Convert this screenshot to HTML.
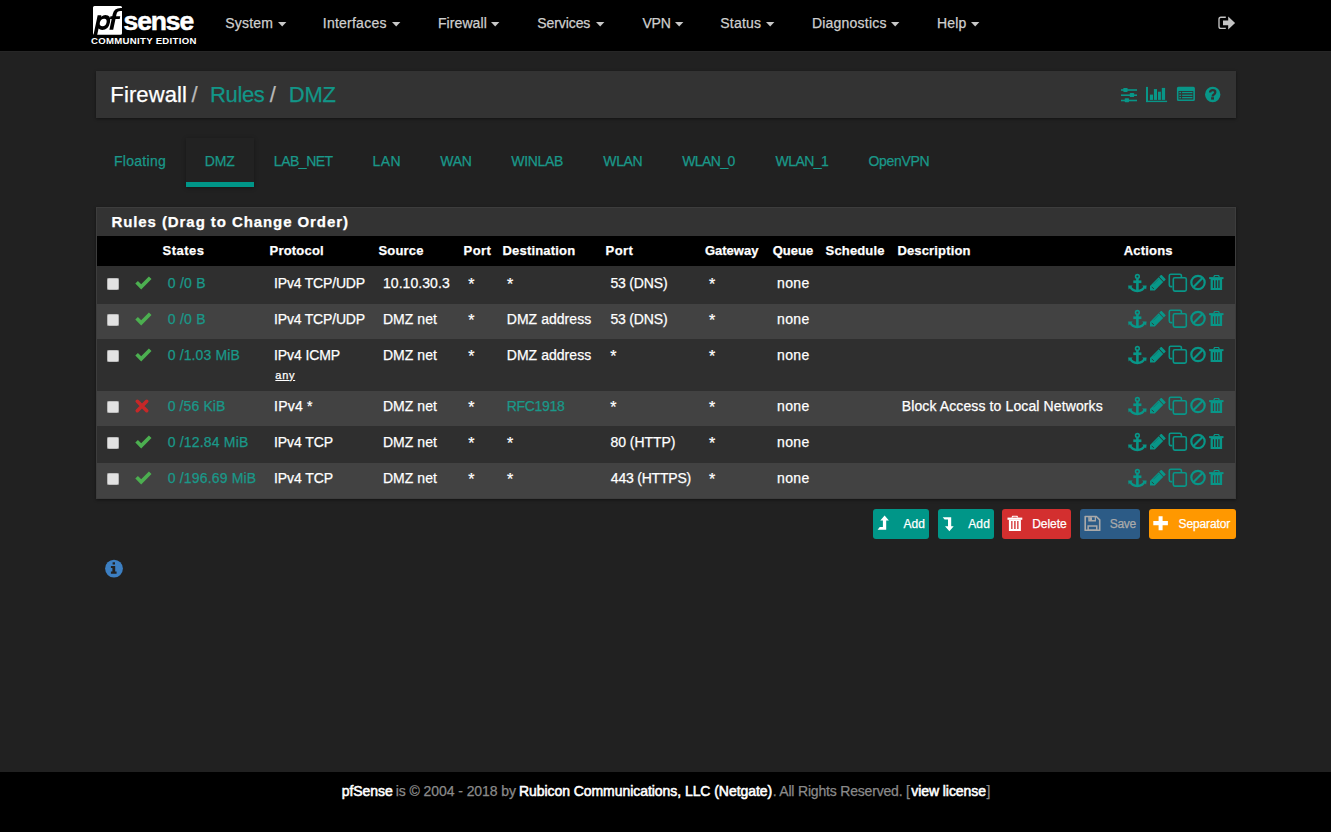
<!DOCTYPE html>
<html><head><meta charset="utf-8">
<style>
html,body{margin:0;padding:0;}
body{width:1331px;height:832px;overflow:hidden;background:#212121;position:relative;font-family:"Liberation Sans",sans-serif;}
.t{position:absolute;white-space:pre;font-family:"Liberation Sans",sans-serif;-webkit-text-stroke:0.25px currentColor;}
.a{position:absolute;}
svg{position:absolute;overflow:visible;}
</style></head><body>
<!-- navbar -->
<div class="a" style="left:0;top:0;width:1331px;height:51px;background:#000"></div>
<div class="a" style="left:0;top:51px;width:1331px;height:1px;background:#262626"></div>
<!-- header panel -->
<div class="a" style="left:96px;top:71px;width:1140px;height:47px;background:#333;box-shadow:0 1px 3px rgba(0,0,0,0.45)"></div>
<!-- active tab -->
<div class="a" style="left:186px;top:138px;width:68px;height:49px;background:#222;box-shadow:0 1px 4px rgba(0,0,0,0.35)"></div>
<div class="a" style="left:186px;top:182px;width:68px;height:5px;background:#009688"></div>
<!-- rules panel -->
<div class="a" style="left:96px;top:207px;width:1140px;height:292px;background:#3d3d3d;box-shadow:0 1px 3px rgba(0,0,0,0.45)"></div>
<div class="a" style="left:97px;top:208px;width:1138px;height:28px;background:#333"></div>
<div class="a" style="left:97px;top:236px;width:1138px;height:30px;background:#000"></div>
<div class="a" style="left:97px;top:266px;width:1138px;height:38px;background:#2f2f2f"></div>
<div class="a" style="left:97px;top:304px;width:1138px;height:35px;background:#424242"></div>
<div class="a" style="left:97px;top:339px;width:1138px;height:52px;background:#2f2f2f"></div>
<div class="a" style="left:97px;top:391px;width:1138px;height:35px;background:#424242"></div>
<div class="a" style="left:97px;top:426px;width:1138px;height:37px;background:#2f2f2f"></div>
<div class="a" style="left:97px;top:463px;width:1138px;height:35px;background:#424242"></div>
<!-- footer -->
<div class="a" style="left:0;top:772px;width:1331px;height:60px;background:#000"></div>
<svg style="left:90px;top:4px" width="110" height="44" viewBox="0 0 110 44" >
<path d="M3.5 1.9 H30.5 Q32 1.9 32 3.4 V29.2 Q32 30.7 30.5 30.7 H4.5 Q3 30.7 3 29.2 V3.4 Q3 1.9 4.5 1.9 Z" fill="#fff"/>
<g transform="translate(4.6,25.7) skewX(-12)">
<path fill-rule="evenodd" d="M0 -14.4 H3.7 V-13 Q5.5 -14.6 7.6 -14.6 Q13.8 -14.6 13.8 -7.3 Q13.8 0.2 7.6 0.2 Q5.4 0.2 3.7 -1.2 V5.5 H0 Z M3.7 -7.2 Q3.7 -3.4 7.3 -3.4 Q10.4 -3.4 10.4 -7.2 Q10.4 -11 7.3 -11 Q3.7 -11 3.7 -7.2 Z" fill="#000"/>
</g>
<g transform="translate(19.4,25.7) skewX(-12)">
<path d="M0 0 V-15.5 Q0 -21.8 6.6 -21.8 H9.5 V-18.7 H6.9 Q3.8 -18.7 3.8 -15.5 V0 Z" fill="#000"/>
<rect x="-1.8" y="-13.4" width="9.8" height="2.7" fill="#000"/>
</g>
<text x="33.5" y="25.8" font-family="Liberation Sans" font-weight="700" font-size="26.5" fill="#fff" stroke="#fff" stroke-width="0.5" letter-spacing="-1.1">sense</text>
<text x="1" y="40.3" font-family="Liberation Sans" font-weight="700" font-size="9.6" fill="#fff" letter-spacing="0.3">COMMUNITY EDITION</text>
</svg>
<svg style="left:277.8px;top:21.6px" width="8.4" height="4.6" viewBox="0 0 8.4 4.6" ><path d="M0 0 H8.4 L4.2 4.4 Z" fill="#c8c8c8"/></svg>
<svg style="left:392.0px;top:21.6px" width="8.4" height="4.6" viewBox="0 0 8.4 4.6" ><path d="M0 0 H8.4 L4.2 4.4 Z" fill="#c8c8c8"/></svg>
<svg style="left:491.1px;top:21.6px" width="8.4" height="4.6" viewBox="0 0 8.4 4.6" ><path d="M0 0 H8.4 L4.2 4.4 Z" fill="#c8c8c8"/></svg>
<svg style="left:596.0px;top:21.6px" width="8.4" height="4.6" viewBox="0 0 8.4 4.6" ><path d="M0 0 H8.4 L4.2 4.4 Z" fill="#c8c8c8"/></svg>
<svg style="left:675.3px;top:21.6px" width="8.4" height="4.6" viewBox="0 0 8.4 4.6" ><path d="M0 0 H8.4 L4.2 4.4 Z" fill="#c8c8c8"/></svg>
<svg style="left:765.6999999999999px;top:21.6px" width="8.4" height="4.6" viewBox="0 0 8.4 4.6" ><path d="M0 0 H8.4 L4.2 4.4 Z" fill="#c8c8c8"/></svg>
<svg style="left:890.6999999999999px;top:21.6px" width="8.4" height="4.6" viewBox="0 0 8.4 4.6" ><path d="M0 0 H8.4 L4.2 4.4 Z" fill="#c8c8c8"/></svg>
<svg style="left:971.1999999999999px;top:21.6px" width="8.4" height="4.6" viewBox="0 0 8.4 4.6" ><path d="M0 0 H8.4 L4.2 4.4 Z" fill="#c8c8c8"/></svg>
<svg style="left:1218px;top:15.5px" width="18" height="14" viewBox="0 0 18 14" >
<path d="M7.8 1.2 H3 Q1 1.2 1 3.2 V10.4 Q1 12.4 3 12.4 H7.8" fill="none" stroke="#c4c4c4" stroke-width="1.35"/>
<path d="M5 4.6 H10.2 V0.6 L17.1 7 L10.2 13.4 V9.3 H5 Z" fill="#c4c4c4"/>
</svg>
<svg style="left:1120px;top:86px" width="18" height="18" viewBox="0 0 18 18" >
<rect x="1" y="3.2" width="16" height="1.6" fill="#089688"/>
<rect x="1" y="8.4" width="16" height="1.6" fill="#089688"/>
<rect x="1" y="13.7" width="16" height="1.6" fill="#089688"/>
<rect x="3.3" y="1.9" width="4.3" height="4" rx="0.6" fill="#089688"/>
<rect x="9.8" y="7" width="4.3" height="4" rx="0.6" fill="#089688"/>
<rect x="4.7" y="12.2" width="4.3" height="4" rx="0.6" fill="#089688"/>
</svg>
<svg style="left:1145px;top:86px" width="24" height="18" viewBox="0 0 24 18" >
<rect x="1" y="0.9" width="2" height="15.2" fill="#089688"/>
<rect x="1" y="14.7" width="21.1" height="1.4" fill="#089688"/>
<rect x="4.9" y="8.6" width="3.1" height="5.3" fill="#089688"/>
<rect x="8.9" y="3.1" width="3.1" height="10.8" fill="#089688"/>
<rect x="13" y="5.7" width="2.9" height="8.2" fill="#089688"/>
<rect x="16.8" y="1.9" width="3.3" height="12" fill="#089688"/>
</svg>
<svg style="left:1176px;top:86px" width="20" height="16" viewBox="0 0 20 16" >
<path fill-rule="evenodd" d="M2.4 0.8 H17.4 Q18.9 0.8 18.9 2.3 V13.6 Q18.9 15.1 17.4 15.1 H2.4 Q0.9 15.1 0.9 13.6 V2.3 Q0.9 0.8 2.4 0.8 Z M2.5 5.1 V13.6 H17.3 V5.1 Z" fill="#089688"/>
<rect x="3.3" y="5.9" width="1.8" height="1.3" fill="#089688"/>
<rect x="3.3" y="8.6" width="1.8" height="1.3" fill="#089688"/>
<rect x="3.3" y="11" width="1.8" height="1.3" fill="#089688"/>
<rect x="6.1" y="5.9" width="10.4" height="1.3" fill="#089688"/>
<rect x="6.1" y="8.6" width="10.4" height="1.3" fill="#089688"/>
<rect x="6.1" y="11" width="10.4" height="1.3" fill="#089688"/>
</svg>
<svg style="left:1204px;top:86px" width="18" height="18" viewBox="0 0 18 18" >
<circle cx="8.7" cy="8.45" r="7.7" fill="#089688"/>
<path d="M6.1 6.6 Q6.1 4.2 8.8 4.2 Q11.3 4.2 11.3 6.3 Q11.3 7.6 9.9 8.4 Q8.7 9.1 8.7 10.1 V10.6" fill="none" stroke="#333" stroke-width="2.3"/>
<rect x="7.1" y="11.2" width="2.9" height="2.4" fill="#333"/>
</svg>
<div class="a" style="left:107px;top:278px;width:12px;height:12px;background:#e2e2e2;border-radius:2px;box-shadow:inset 0 0 0 0.6px #9a9a9a"></div>
<svg style="left:134px;top:275px" width="19" height="15" viewBox="0 0 19 15" ><path d="M2.6 7.2 L7.2 11.8 L16.2 2.8" fill="none" stroke="#4caf50" stroke-width="3.7" stroke-linejoin="miter"/></svg>
<svg style="left:1127px;top:272.5px" width="21" height="21" viewBox="0 0 21 21" >
<circle cx="10.4" cy="3.5" r="1.85" fill="none" stroke="#089688" stroke-width="1.6"/>
<rect x="6.3" y="7.4" width="8.1" height="2.7" fill="#089688"/>
<rect x="9.1" y="5.3" width="2.6" height="12.8" fill="#089688"/>
<path d="M3.2 13.4 Q4.8 18 10.4 18 Q16 18 17.6 13.4" fill="none" stroke="#089688" stroke-width="2.4"/>
<path d="M1.1 12.5 H5.6 L1.6 16.6 Z" fill="#089688"/>
<path d="M19.6 12.5 H15.1 L19.1 16.6 Z" fill="#089688"/>
</svg>
<svg style="left:1149.8px;top:274.8px" width="16" height="16" viewBox="0 0 16 16" >
<path d="M0 15.4 L0 11.0 L8.65 2.35 L13.25 6.95 L4.8 15.4 Z" fill="#089688"/>
<path d="M9.2 1.8 L10.9 0.1 Q11.3 -0.3 11.7 0.1 L15.5 3.9 Q15.9 4.3 15.5 4.7 L13.8 6.4 Z" fill="#089688"/>
<path d="M1.7 11.8 L3.9 14.0" stroke="#2f2f2f" stroke-width="0.9" opacity="0.9"/>
<path d="M3.4 9.3 L8.6 4.1" stroke="#2f2f2f" stroke-width="0.45" opacity="0.6"/>
</svg>
<svg style="left:1168px;top:273px" width="20" height="20" viewBox="0 0 20 20" >
<path d="M13.4 3.9 V2.8 Q13.4 1.3 11.9 1.3 H2.7 Q1.3 1.3 1.3 2.8 V12.1 Q1.3 13.6 2.7 13.6 H4.3" fill="none" stroke="#089688" stroke-width="1.6"/>
<rect x="5.3" y="4.7" width="13" height="13.4" rx="1.5" fill="none" stroke="#089688" stroke-width="1.6"/>
</svg>
<svg style="left:1189px;top:274px" width="18" height="18" viewBox="0 0 18 18" >
<circle cx="9" cy="8.5" r="6.7" fill="none" stroke="#089688" stroke-width="2.2"/>
<path d="M13.7 3.8 L4.3 13.2" stroke="#089688" stroke-width="2.2"/>
</svg>
<svg style="left:1209px;top:274px" width="15" height="17" viewBox="0 0 15 17" >
<path fill-rule="evenodd" d="M4.2 3.1 L5.1 1.1 H10 L10.9 3.1 Z M5.5 3.1 L6.0 2.1 H9.1 L9.6 3.1 Z" fill="#089688"/>
<rect x="0.1" y="3.1" width="14.4" height="2" fill="#089688"/>
<path fill-rule="evenodd" d="M1.6 5 H13.1 V15.9 H1.6 Z M3.9 6.2 V13.9 H5 V6.2 Z M6.6 6.2 V13.9 H7.9 V6.2 Z M9.3 6.2 V13.9 H10.6 V6.2 Z" fill="#089688"/>
</svg>
<div class="a" style="left:107px;top:314px;width:12px;height:12px;background:#e2e2e2;border-radius:2px;box-shadow:inset 0 0 0 0.6px #9a9a9a"></div>
<svg style="left:134px;top:311px" width="19" height="15" viewBox="0 0 19 15" ><path d="M2.6 7.2 L7.2 11.8 L16.2 2.8" fill="none" stroke="#4caf50" stroke-width="3.7" stroke-linejoin="miter"/></svg>
<svg style="left:1127px;top:308.5px" width="21" height="21" viewBox="0 0 21 21" >
<circle cx="10.4" cy="3.5" r="1.85" fill="none" stroke="#089688" stroke-width="1.6"/>
<rect x="6.3" y="7.4" width="8.1" height="2.7" fill="#089688"/>
<rect x="9.1" y="5.3" width="2.6" height="12.8" fill="#089688"/>
<path d="M3.2 13.4 Q4.8 18 10.4 18 Q16 18 17.6 13.4" fill="none" stroke="#089688" stroke-width="2.4"/>
<path d="M1.1 12.5 H5.6 L1.6 16.6 Z" fill="#089688"/>
<path d="M19.6 12.5 H15.1 L19.1 16.6 Z" fill="#089688"/>
</svg>
<svg style="left:1149.8px;top:310.8px" width="16" height="16" viewBox="0 0 16 16" >
<path d="M0 15.4 L0 11.0 L8.65 2.35 L13.25 6.95 L4.8 15.4 Z" fill="#089688"/>
<path d="M9.2 1.8 L10.9 0.1 Q11.3 -0.3 11.7 0.1 L15.5 3.9 Q15.9 4.3 15.5 4.7 L13.8 6.4 Z" fill="#089688"/>
<path d="M1.7 11.8 L3.9 14.0" stroke="#2f2f2f" stroke-width="0.9" opacity="0.9"/>
<path d="M3.4 9.3 L8.6 4.1" stroke="#2f2f2f" stroke-width="0.45" opacity="0.6"/>
</svg>
<svg style="left:1168px;top:309px" width="20" height="20" viewBox="0 0 20 20" >
<path d="M13.4 3.9 V2.8 Q13.4 1.3 11.9 1.3 H2.7 Q1.3 1.3 1.3 2.8 V12.1 Q1.3 13.6 2.7 13.6 H4.3" fill="none" stroke="#089688" stroke-width="1.6"/>
<rect x="5.3" y="4.7" width="13" height="13.4" rx="1.5" fill="none" stroke="#089688" stroke-width="1.6"/>
</svg>
<svg style="left:1189px;top:310px" width="18" height="18" viewBox="0 0 18 18" >
<circle cx="9" cy="8.5" r="6.7" fill="none" stroke="#089688" stroke-width="2.2"/>
<path d="M13.7 3.8 L4.3 13.2" stroke="#089688" stroke-width="2.2"/>
</svg>
<svg style="left:1209px;top:310px" width="15" height="17" viewBox="0 0 15 17" >
<path fill-rule="evenodd" d="M4.2 3.1 L5.1 1.1 H10 L10.9 3.1 Z M5.5 3.1 L6.0 2.1 H9.1 L9.6 3.1 Z" fill="#089688"/>
<rect x="0.1" y="3.1" width="14.4" height="2" fill="#089688"/>
<path fill-rule="evenodd" d="M1.6 5 H13.1 V15.9 H1.6 Z M3.9 6.2 V13.9 H5 V6.2 Z M6.6 6.2 V13.9 H7.9 V6.2 Z M9.3 6.2 V13.9 H10.6 V6.2 Z" fill="#089688"/>
</svg>
<div class="a" style="left:107px;top:350px;width:12px;height:12px;background:#e2e2e2;border-radius:2px;box-shadow:inset 0 0 0 0.6px #9a9a9a"></div>
<svg style="left:134px;top:347px" width="19" height="15" viewBox="0 0 19 15" ><path d="M2.6 7.2 L7.2 11.8 L16.2 2.8" fill="none" stroke="#4caf50" stroke-width="3.7" stroke-linejoin="miter"/></svg>
<svg style="left:1127px;top:344.5px" width="21" height="21" viewBox="0 0 21 21" >
<circle cx="10.4" cy="3.5" r="1.85" fill="none" stroke="#089688" stroke-width="1.6"/>
<rect x="6.3" y="7.4" width="8.1" height="2.7" fill="#089688"/>
<rect x="9.1" y="5.3" width="2.6" height="12.8" fill="#089688"/>
<path d="M3.2 13.4 Q4.8 18 10.4 18 Q16 18 17.6 13.4" fill="none" stroke="#089688" stroke-width="2.4"/>
<path d="M1.1 12.5 H5.6 L1.6 16.6 Z" fill="#089688"/>
<path d="M19.6 12.5 H15.1 L19.1 16.6 Z" fill="#089688"/>
</svg>
<svg style="left:1149.8px;top:346.8px" width="16" height="16" viewBox="0 0 16 16" >
<path d="M0 15.4 L0 11.0 L8.65 2.35 L13.25 6.95 L4.8 15.4 Z" fill="#089688"/>
<path d="M9.2 1.8 L10.9 0.1 Q11.3 -0.3 11.7 0.1 L15.5 3.9 Q15.9 4.3 15.5 4.7 L13.8 6.4 Z" fill="#089688"/>
<path d="M1.7 11.8 L3.9 14.0" stroke="#2f2f2f" stroke-width="0.9" opacity="0.9"/>
<path d="M3.4 9.3 L8.6 4.1" stroke="#2f2f2f" stroke-width="0.45" opacity="0.6"/>
</svg>
<svg style="left:1168px;top:345px" width="20" height="20" viewBox="0 0 20 20" >
<path d="M13.4 3.9 V2.8 Q13.4 1.3 11.9 1.3 H2.7 Q1.3 1.3 1.3 2.8 V12.1 Q1.3 13.6 2.7 13.6 H4.3" fill="none" stroke="#089688" stroke-width="1.6"/>
<rect x="5.3" y="4.7" width="13" height="13.4" rx="1.5" fill="none" stroke="#089688" stroke-width="1.6"/>
</svg>
<svg style="left:1189px;top:346px" width="18" height="18" viewBox="0 0 18 18" >
<circle cx="9" cy="8.5" r="6.7" fill="none" stroke="#089688" stroke-width="2.2"/>
<path d="M13.7 3.8 L4.3 13.2" stroke="#089688" stroke-width="2.2"/>
</svg>
<svg style="left:1209px;top:346px" width="15" height="17" viewBox="0 0 15 17" >
<path fill-rule="evenodd" d="M4.2 3.1 L5.1 1.1 H10 L10.9 3.1 Z M5.5 3.1 L6.0 2.1 H9.1 L9.6 3.1 Z" fill="#089688"/>
<rect x="0.1" y="3.1" width="14.4" height="2" fill="#089688"/>
<path fill-rule="evenodd" d="M1.6 5 H13.1 V15.9 H1.6 Z M3.9 6.2 V13.9 H5 V6.2 Z M6.6 6.2 V13.9 H7.9 V6.2 Z M9.3 6.2 V13.9 H10.6 V6.2 Z" fill="#089688"/>
</svg>
<div class="a" style="left:107px;top:401px;width:12px;height:12px;background:#e2e2e2;border-radius:2px;box-shadow:inset 0 0 0 0.6px #9a9a9a"></div>
<svg style="left:134px;top:398px" width="16" height="16" viewBox="0 0 16 16" ><path d="M3.3 3.3 L12.7 12.7 M12.7 3.3 L3.3 12.7" fill="none" stroke="#c62828" stroke-width="3.6" stroke-linecap="round"/></svg>
<svg style="left:1127px;top:395.5px" width="21" height="21" viewBox="0 0 21 21" >
<circle cx="10.4" cy="3.5" r="1.85" fill="none" stroke="#089688" stroke-width="1.6"/>
<rect x="6.3" y="7.4" width="8.1" height="2.7" fill="#089688"/>
<rect x="9.1" y="5.3" width="2.6" height="12.8" fill="#089688"/>
<path d="M3.2 13.4 Q4.8 18 10.4 18 Q16 18 17.6 13.4" fill="none" stroke="#089688" stroke-width="2.4"/>
<path d="M1.1 12.5 H5.6 L1.6 16.6 Z" fill="#089688"/>
<path d="M19.6 12.5 H15.1 L19.1 16.6 Z" fill="#089688"/>
</svg>
<svg style="left:1149.8px;top:397.8px" width="16" height="16" viewBox="0 0 16 16" >
<path d="M0 15.4 L0 11.0 L8.65 2.35 L13.25 6.95 L4.8 15.4 Z" fill="#089688"/>
<path d="M9.2 1.8 L10.9 0.1 Q11.3 -0.3 11.7 0.1 L15.5 3.9 Q15.9 4.3 15.5 4.7 L13.8 6.4 Z" fill="#089688"/>
<path d="M1.7 11.8 L3.9 14.0" stroke="#2f2f2f" stroke-width="0.9" opacity="0.9"/>
<path d="M3.4 9.3 L8.6 4.1" stroke="#2f2f2f" stroke-width="0.45" opacity="0.6"/>
</svg>
<svg style="left:1168px;top:396px" width="20" height="20" viewBox="0 0 20 20" >
<path d="M13.4 3.9 V2.8 Q13.4 1.3 11.9 1.3 H2.7 Q1.3 1.3 1.3 2.8 V12.1 Q1.3 13.6 2.7 13.6 H4.3" fill="none" stroke="#089688" stroke-width="1.6"/>
<rect x="5.3" y="4.7" width="13" height="13.4" rx="1.5" fill="none" stroke="#089688" stroke-width="1.6"/>
</svg>
<svg style="left:1189px;top:397px" width="18" height="18" viewBox="0 0 18 18" >
<circle cx="9" cy="8.5" r="6.7" fill="none" stroke="#089688" stroke-width="2.2"/>
<path d="M13.7 3.8 L4.3 13.2" stroke="#089688" stroke-width="2.2"/>
</svg>
<svg style="left:1209px;top:397px" width="15" height="17" viewBox="0 0 15 17" >
<path fill-rule="evenodd" d="M4.2 3.1 L5.1 1.1 H10 L10.9 3.1 Z M5.5 3.1 L6.0 2.1 H9.1 L9.6 3.1 Z" fill="#089688"/>
<rect x="0.1" y="3.1" width="14.4" height="2" fill="#089688"/>
<path fill-rule="evenodd" d="M1.6 5 H13.1 V15.9 H1.6 Z M3.9 6.2 V13.9 H5 V6.2 Z M6.6 6.2 V13.9 H7.9 V6.2 Z M9.3 6.2 V13.9 H10.6 V6.2 Z" fill="#089688"/>
</svg>
<div class="a" style="left:107px;top:437px;width:12px;height:12px;background:#e2e2e2;border-radius:2px;box-shadow:inset 0 0 0 0.6px #9a9a9a"></div>
<svg style="left:134px;top:434px" width="19" height="15" viewBox="0 0 19 15" ><path d="M2.6 7.2 L7.2 11.8 L16.2 2.8" fill="none" stroke="#4caf50" stroke-width="3.7" stroke-linejoin="miter"/></svg>
<svg style="left:1127px;top:431.5px" width="21" height="21" viewBox="0 0 21 21" >
<circle cx="10.4" cy="3.5" r="1.85" fill="none" stroke="#089688" stroke-width="1.6"/>
<rect x="6.3" y="7.4" width="8.1" height="2.7" fill="#089688"/>
<rect x="9.1" y="5.3" width="2.6" height="12.8" fill="#089688"/>
<path d="M3.2 13.4 Q4.8 18 10.4 18 Q16 18 17.6 13.4" fill="none" stroke="#089688" stroke-width="2.4"/>
<path d="M1.1 12.5 H5.6 L1.6 16.6 Z" fill="#089688"/>
<path d="M19.6 12.5 H15.1 L19.1 16.6 Z" fill="#089688"/>
</svg>
<svg style="left:1149.8px;top:433.8px" width="16" height="16" viewBox="0 0 16 16" >
<path d="M0 15.4 L0 11.0 L8.65 2.35 L13.25 6.95 L4.8 15.4 Z" fill="#089688"/>
<path d="M9.2 1.8 L10.9 0.1 Q11.3 -0.3 11.7 0.1 L15.5 3.9 Q15.9 4.3 15.5 4.7 L13.8 6.4 Z" fill="#089688"/>
<path d="M1.7 11.8 L3.9 14.0" stroke="#2f2f2f" stroke-width="0.9" opacity="0.9"/>
<path d="M3.4 9.3 L8.6 4.1" stroke="#2f2f2f" stroke-width="0.45" opacity="0.6"/>
</svg>
<svg style="left:1168px;top:432px" width="20" height="20" viewBox="0 0 20 20" >
<path d="M13.4 3.9 V2.8 Q13.4 1.3 11.9 1.3 H2.7 Q1.3 1.3 1.3 2.8 V12.1 Q1.3 13.6 2.7 13.6 H4.3" fill="none" stroke="#089688" stroke-width="1.6"/>
<rect x="5.3" y="4.7" width="13" height="13.4" rx="1.5" fill="none" stroke="#089688" stroke-width="1.6"/>
</svg>
<svg style="left:1189px;top:433px" width="18" height="18" viewBox="0 0 18 18" >
<circle cx="9" cy="8.5" r="6.7" fill="none" stroke="#089688" stroke-width="2.2"/>
<path d="M13.7 3.8 L4.3 13.2" stroke="#089688" stroke-width="2.2"/>
</svg>
<svg style="left:1209px;top:433px" width="15" height="17" viewBox="0 0 15 17" >
<path fill-rule="evenodd" d="M4.2 3.1 L5.1 1.1 H10 L10.9 3.1 Z M5.5 3.1 L6.0 2.1 H9.1 L9.6 3.1 Z" fill="#089688"/>
<rect x="0.1" y="3.1" width="14.4" height="2" fill="#089688"/>
<path fill-rule="evenodd" d="M1.6 5 H13.1 V15.9 H1.6 Z M3.9 6.2 V13.9 H5 V6.2 Z M6.6 6.2 V13.9 H7.9 V6.2 Z M9.3 6.2 V13.9 H10.6 V6.2 Z" fill="#089688"/>
</svg>
<div class="a" style="left:107px;top:473px;width:12px;height:12px;background:#e2e2e2;border-radius:2px;box-shadow:inset 0 0 0 0.6px #9a9a9a"></div>
<svg style="left:134px;top:470px" width="19" height="15" viewBox="0 0 19 15" ><path d="M2.6 7.2 L7.2 11.8 L16.2 2.8" fill="none" stroke="#4caf50" stroke-width="3.7" stroke-linejoin="miter"/></svg>
<svg style="left:1127px;top:467.5px" width="21" height="21" viewBox="0 0 21 21" >
<circle cx="10.4" cy="3.5" r="1.85" fill="none" stroke="#089688" stroke-width="1.6"/>
<rect x="6.3" y="7.4" width="8.1" height="2.7" fill="#089688"/>
<rect x="9.1" y="5.3" width="2.6" height="12.8" fill="#089688"/>
<path d="M3.2 13.4 Q4.8 18 10.4 18 Q16 18 17.6 13.4" fill="none" stroke="#089688" stroke-width="2.4"/>
<path d="M1.1 12.5 H5.6 L1.6 16.6 Z" fill="#089688"/>
<path d="M19.6 12.5 H15.1 L19.1 16.6 Z" fill="#089688"/>
</svg>
<svg style="left:1149.8px;top:469.8px" width="16" height="16" viewBox="0 0 16 16" >
<path d="M0 15.4 L0 11.0 L8.65 2.35 L13.25 6.95 L4.8 15.4 Z" fill="#089688"/>
<path d="M9.2 1.8 L10.9 0.1 Q11.3 -0.3 11.7 0.1 L15.5 3.9 Q15.9 4.3 15.5 4.7 L13.8 6.4 Z" fill="#089688"/>
<path d="M1.7 11.8 L3.9 14.0" stroke="#2f2f2f" stroke-width="0.9" opacity="0.9"/>
<path d="M3.4 9.3 L8.6 4.1" stroke="#2f2f2f" stroke-width="0.45" opacity="0.6"/>
</svg>
<svg style="left:1168px;top:468px" width="20" height="20" viewBox="0 0 20 20" >
<path d="M13.4 3.9 V2.8 Q13.4 1.3 11.9 1.3 H2.7 Q1.3 1.3 1.3 2.8 V12.1 Q1.3 13.6 2.7 13.6 H4.3" fill="none" stroke="#089688" stroke-width="1.6"/>
<rect x="5.3" y="4.7" width="13" height="13.4" rx="1.5" fill="none" stroke="#089688" stroke-width="1.6"/>
</svg>
<svg style="left:1189px;top:469px" width="18" height="18" viewBox="0 0 18 18" >
<circle cx="9" cy="8.5" r="6.7" fill="none" stroke="#089688" stroke-width="2.2"/>
<path d="M13.7 3.8 L4.3 13.2" stroke="#089688" stroke-width="2.2"/>
</svg>
<svg style="left:1209px;top:469px" width="15" height="17" viewBox="0 0 15 17" >
<path fill-rule="evenodd" d="M4.2 3.1 L5.1 1.1 H10 L10.9 3.1 Z M5.5 3.1 L6.0 2.1 H9.1 L9.6 3.1 Z" fill="#089688"/>
<rect x="0.1" y="3.1" width="14.4" height="2" fill="#089688"/>
<path fill-rule="evenodd" d="M1.6 5 H13.1 V15.9 H1.6 Z M3.9 6.2 V13.9 H5 V6.2 Z M6.6 6.2 V13.9 H7.9 V6.2 Z M9.3 6.2 V13.9 H10.6 V6.2 Z" fill="#089688"/>
</svg>
<div class="a" style="left:873px;top:509px;width:56px;height:30px;background:#009688;border-radius:3px"></div>
<div class="a" style="left:938px;top:509px;width:56px;height:30px;background:#009688;border-radius:3px"></div>
<div class="a" style="left:1002px;top:509px;width:69px;height:30px;background:#d32f2f;border-radius:3px"></div>
<div class="a" style="left:1080px;top:509px;width:60px;height:30px;background:#2c5b86;border-radius:3px"></div>
<div class="a" style="left:1149px;top:509px;width:87px;height:30px;background:#ff9800;border-radius:3px"></div>
<svg style="left:877px;top:515px" width="13" height="16" viewBox="0 0 13 16" ><path d="M7.6 0.6 L11.9 5.6 H9.2 V14.8 H0.6 L2.8 11.9 H5.9 V5.6 H3.3 Z" fill="#fff"/></svg>
<svg style="left:942px;top:517px" width="13" height="16" viewBox="0 0 13 16" ><path d="M0.7 0.3 H9.2 V9.2 H11.7 L7.4 14.2 L3 9.2 H6 V2.6 H2.6 Z" fill="#fff"/></svg>
<svg style="left:1006.5px;top:515px" width="16" height="17" viewBox="0 0 16 17" >
<path fill-rule="evenodd" d="M4.3 2.6 L5.3 0.7 H10.4 L11.4 2.6 Z M5.8 2.6 L6.3 1.7 H9.4 L9.9 2.6 Z" fill="#fff"/>
<rect x="0.5" y="2.6" width="14.8" height="2.2" fill="#fff"/>
<path fill-rule="evenodd" d="M1.9 4.7 H13.9 V16.1 H1.9 Z M4.2 6 V14.1 H5.5 V6 Z M7.2 6 V14.1 H8.6 V6 Z M10.2 6 V14.1 H11.5 V6 Z" fill="#fff"/>
</svg>
<svg style="left:1084px;top:515px" width="17" height="17" viewBox="0 0 17 17" >
<path fill-rule="evenodd" d="M1.6 0.7 H12.6 L16.5 4.6 V15.4 Q16.5 16.1 15.8 16.1 H1.1 Q0.4 16.1 0.4 15.4 V1.4 Q0.4 0.7 1.1 0.7 Z M2 2.2 V14.6 H14.9 V5.3 L12 2.3 V6.4 H4.3 V2.2 Z M5.5 2.2 V5.1 H10.7 V2.2 Z" fill="#a9a9a9"/>
<rect x="5.3" y="2.2" width="2.7" height="3.3" fill="#a9a9a9"/>
<path fill-rule="evenodd" d="M3.4 10.3 H13.5 V16 H3.4 Z M4.9 11.8 V14.6 H12 V11.8 Z" fill="#a9a9a9"/>
</svg>
<svg style="left:1153px;top:515.5px" width="16" height="15" viewBox="0 0 16 15" ><path d="M5.6 0.3 H9.6 V5.1 H14.9 V9.3 H9.6 V14.3 H5.6 V9.3 H0.3 V5.1 H5.6 Z" fill="#fff"/></svg>
<svg style="left:104px;top:559px" width="20" height="20" viewBox="0 0 20 20" >
<circle cx="10" cy="9.6" r="8.9" fill="#3c7fc2"/>
<rect x="8.6" y="3.3" width="2.4" height="2.2" fill="#222"/>
<path d="M6.9 6.9 H11.2 V12.6 H12.6 V14.7 H6.9 V12.6 H8.4 V9 H6.9 Z" fill="#222"/>
</svg>
<span class="t" style="left:225.35px;top:15.94px;font-size:14px;line-height:14px;font-weight:400;letter-spacing:0.187px;color:#cfcfcf;">System</span>
<span class="t" style="left:322.75px;top:15.94px;font-size:14px;line-height:14px;font-weight:400;letter-spacing:0.245px;color:#cfcfcf;">Interfaces</span>
<span class="t" style="left:437.94px;top:15.94px;font-size:14px;line-height:14px;font-weight:400;letter-spacing:0.087px;color:#cfcfcf;">Firewall</span>
<span class="t" style="left:537.25px;top:15.94px;font-size:14px;line-height:14px;font-weight:400;letter-spacing:-0.083px;color:#cfcfcf;">Services</span>
<span class="t" style="left:642.40px;top:15.94px;font-size:14px;line-height:14px;font-weight:400;letter-spacing:-0.166px;color:#cfcfcf;">VPN</span>
<span class="t" style="left:720.25px;top:15.94px;font-size:14px;line-height:14px;font-weight:400;letter-spacing:0.224px;color:#cfcfcf;">Status</span>
<span class="t" style="left:811.94px;top:15.94px;font-size:14px;line-height:14px;font-weight:400;letter-spacing:0.217px;color:#cfcfcf;">Diagnostics</span>
<span class="t" style="left:937.03px;top:15.94px;font-size:14px;line-height:14px;font-weight:400;letter-spacing:0.188px;color:#cfcfcf;">Help</span>
<span class="t" style="left:110.36px;top:84.04px;font-size:22px;line-height:22px;font-weight:400;letter-spacing:0.099px;color:#fff;">Firewall</span>
<span class="t" style="left:191.43px;top:84.04px;font-size:22px;line-height:22px;font-weight:400;letter-spacing:0px;color:#b9b9b9;">/</span>
<span class="t" style="left:210.06px;top:84.04px;font-size:22px;line-height:22px;font-weight:400;letter-spacing:-0.391px;color:#129688;">Rules</span>
<span class="t" style="left:269.63px;top:84.04px;font-size:22px;line-height:22px;font-weight:400;letter-spacing:0px;color:#b9b9b9;">/</span>
<span class="t" style="left:288.86px;top:84.04px;font-size:22px;line-height:22px;font-weight:400;letter-spacing:-0.266px;color:#129688;">DMZ</span>
<span class="t" style="left:113.94px;top:153.84px;font-size:14px;line-height:14px;font-weight:400;letter-spacing:0.297px;color:#1a9889;">Floating</span>
<span class="t" style="left:204.64px;top:153.84px;font-size:14px;line-height:14px;font-weight:400;letter-spacing:-0.063px;color:#1a9889;">DMZ</span>
<span class="t" style="left:273.83px;top:153.84px;font-size:14px;line-height:14px;font-weight:400;letter-spacing:-0.485px;color:#1a9889;">LAB_NET</span>
<span class="t" style="left:372.43px;top:153.84px;font-size:14px;line-height:14px;font-weight:400;letter-spacing:0.449px;color:#1a9889;">LAN</span>
<span class="t" style="left:440.22px;top:153.84px;font-size:14px;line-height:14px;font-weight:400;letter-spacing:-0.195px;color:#1a9889;">WAN</span>
<span class="t" style="left:511.32px;top:153.84px;font-size:14px;line-height:14px;font-weight:400;letter-spacing:-0.311px;color:#1a9889;">WINLAB</span>
<span class="t" style="left:603.32px;top:153.84px;font-size:14px;line-height:14px;font-weight:400;letter-spacing:-0.367px;color:#1a9889;">WLAN</span>
<span class="t" style="left:682.22px;top:153.84px;font-size:14px;line-height:14px;font-weight:400;letter-spacing:-0.569px;color:#1a9889;">WLAN_0</span>
<span class="t" style="left:775.62px;top:153.84px;font-size:14px;line-height:14px;font-weight:400;letter-spacing:-0.557px;color:#1a9889;">WLAN_1</span>
<span class="t" style="left:868.53px;top:153.84px;font-size:14px;line-height:14px;font-weight:400;letter-spacing:-0.333px;color:#1a9889;">OpenVPN</span>
<span class="t" style="left:111.42px;top:213.62px;font-size:15px;line-height:15px;font-weight:700;letter-spacing:0.92px;color:#fff;">Rules (Drag to Change Order)</span>
<span class="t" style="left:162.62px;top:243.92px;font-size:13px;line-height:13px;font-weight:700;letter-spacing:0.447px;color:#fff;">States</span>
<span class="t" style="left:269.50px;top:243.92px;font-size:13px;line-height:13px;font-weight:700;letter-spacing:0.211px;color:#fff;">Protocol</span>
<span class="t" style="left:378.52px;top:243.92px;font-size:13px;line-height:13px;font-weight:700;letter-spacing:0.171px;color:#fff;">Source</span>
<span class="t" style="left:463.60px;top:243.92px;font-size:13px;line-height:13px;font-weight:700;letter-spacing:0.435px;color:#fff;">Port</span>
<span class="t" style="left:502.50px;top:243.92px;font-size:13px;line-height:13px;font-weight:700;letter-spacing:0.181px;color:#fff;">Destination</span>
<span class="t" style="left:605.60px;top:243.92px;font-size:13px;line-height:13px;font-weight:700;letter-spacing:0.435px;color:#fff;">Port</span>
<span class="t" style="left:704.93px;top:243.92px;font-size:13px;line-height:13px;font-weight:700;letter-spacing:0.006px;color:#fff;">Gateway</span>
<span class="t" style="left:772.73px;top:243.92px;font-size:13px;line-height:13px;font-weight:700;letter-spacing:0.031px;color:#fff;">Queue</span>
<span class="t" style="left:825.62px;top:243.92px;font-size:13px;line-height:13px;font-weight:700;letter-spacing:0.149px;color:#fff;">Schedule</span>
<span class="t" style="left:897.40px;top:243.92px;font-size:13px;line-height:13px;font-weight:700;letter-spacing:0.153px;color:#fff;">Description</span>
<span class="t" style="left:1123.66px;top:243.92px;font-size:13px;line-height:13px;font-weight:700;letter-spacing:0.2px;color:#fff;">Actions</span>
<span class="t" style="left:167.72px;top:276.04px;font-size:14px;line-height:14px;font-weight:400;letter-spacing:0.269px;color:#1a9889;">0 /0 B</span>
<span class="t" style="left:274.05px;top:276.04px;font-size:14px;line-height:14px;font-weight:400;letter-spacing:-0.19px;color:#fff;">IPv4 TCP/UDP</span>
<span class="t" style="left:382.95px;top:276.04px;font-size:14px;line-height:14px;font-weight:400;letter-spacing:0.065px;color:#fff;">10.10.30.3</span>
<span class="t" style="left:468.22px;top:276.97px;font-size:16px;line-height:16px;font-weight:400;letter-spacing:0px;color:#fff;">*</span>
<span class="t" style="left:507.12px;top:276.97px;font-size:16px;line-height:16px;font-weight:400;letter-spacing:0px;color:#fff;">*</span>
<span class="t" style="left:610.40px;top:276.04px;font-size:14px;line-height:14px;font-weight:400;letter-spacing:-0.168px;color:#fff;">53 (DNS)</span>
<span class="t" style="left:709.12px;top:276.97px;font-size:16px;line-height:16px;font-weight:400;letter-spacing:0px;color:#fff;">*</span>
<span class="t" style="left:777.11px;top:276.04px;font-size:14px;line-height:14px;font-weight:400;letter-spacing:0.303px;color:#fff;">none</span>
<span class="t" style="left:167.72px;top:312.04px;font-size:14px;line-height:14px;font-weight:400;letter-spacing:0.269px;color:#1a9889;">0 /0 B</span>
<span class="t" style="left:274.05px;top:312.04px;font-size:14px;line-height:14px;font-weight:400;letter-spacing:-0.19px;color:#fff;">IPv4 TCP/UDP</span>
<span class="t" style="left:382.94px;top:312.04px;font-size:14px;line-height:14px;font-weight:400;letter-spacing:0.046px;color:#fff;">DMZ net</span>
<span class="t" style="left:468.22px;top:312.97px;font-size:16px;line-height:16px;font-weight:400;letter-spacing:0px;color:#fff;">*</span>
<span class="t" style="left:506.74px;top:312.04px;font-size:14px;line-height:14px;font-weight:400;letter-spacing:0.045px;color:#fff;">DMZ address</span>
<span class="t" style="left:610.40px;top:312.04px;font-size:14px;line-height:14px;font-weight:400;letter-spacing:-0.168px;color:#fff;">53 (DNS)</span>
<span class="t" style="left:709.12px;top:312.97px;font-size:16px;line-height:16px;font-weight:400;letter-spacing:0px;color:#fff;">*</span>
<span class="t" style="left:777.11px;top:312.04px;font-size:14px;line-height:14px;font-weight:400;letter-spacing:0.303px;color:#fff;">none</span>
<span class="t" style="left:167.72px;top:348.04px;font-size:14px;line-height:14px;font-weight:400;letter-spacing:0.127px;color:#1a9889;">0 /1.03 MiB</span>
<span class="t" style="left:274.05px;top:348.04px;font-size:14px;line-height:14px;font-weight:400;letter-spacing:-0.109px;color:#fff;">IPv4 ICMP</span>
<span class="t" style="left:382.94px;top:348.04px;font-size:14px;line-height:14px;font-weight:400;letter-spacing:0.046px;color:#fff;">DMZ net</span>
<span class="t" style="left:468.22px;top:348.97px;font-size:16px;line-height:16px;font-weight:400;letter-spacing:0px;color:#fff;">*</span>
<span class="t" style="left:506.74px;top:348.04px;font-size:14px;line-height:14px;font-weight:400;letter-spacing:0.045px;color:#fff;">DMZ address</span>
<span class="t" style="left:610.32px;top:348.97px;font-size:16px;line-height:16px;font-weight:400;letter-spacing:0px;color:#fff;">*</span>
<span class="t" style="left:709.12px;top:348.97px;font-size:16px;line-height:16px;font-weight:400;letter-spacing:0px;color:#fff;">*</span>
<span class="t" style="left:777.11px;top:348.04px;font-size:14px;line-height:14px;font-weight:400;letter-spacing:0.303px;color:#fff;">none</span>
<span class="t" style="left:167.72px;top:399.14px;font-size:14px;line-height:14px;font-weight:400;letter-spacing:0.109px;color:#1a9889;">0 /56 KiB</span>
<span class="t" style="left:274.05px;top:399.14px;font-size:14px;line-height:14px;font-weight:400;letter-spacing:0.212px;color:#fff;">IPv4 *</span>
<span class="t" style="left:382.94px;top:399.14px;font-size:14px;line-height:14px;font-weight:400;letter-spacing:0.046px;color:#fff;">DMZ net</span>
<span class="t" style="left:468.22px;top:400.07px;font-size:16px;line-height:16px;font-weight:400;letter-spacing:0px;color:#fff;">*</span>
<span class="t" style="left:506.74px;top:399.14px;font-size:14px;line-height:14px;font-weight:400;letter-spacing:-0.316px;color:#1a9889;">RFC1918</span>
<span class="t" style="left:610.32px;top:400.07px;font-size:16px;line-height:16px;font-weight:400;letter-spacing:0px;color:#fff;">*</span>
<span class="t" style="left:709.12px;top:400.07px;font-size:16px;line-height:16px;font-weight:400;letter-spacing:0px;color:#fff;">*</span>
<span class="t" style="left:777.11px;top:399.14px;font-size:14px;line-height:14px;font-weight:400;letter-spacing:0.303px;color:#fff;">none</span>
<span class="t" style="left:901.74px;top:399.14px;font-size:14px;line-height:14px;font-weight:400;letter-spacing:0.115px;color:#fff;">Block Access to Local Networks</span>
<span class="t" style="left:167.72px;top:435.14px;font-size:14px;line-height:14px;font-weight:400;letter-spacing:0.177px;color:#1a9889;">0 /12.84 MiB</span>
<span class="t" style="left:274.05px;top:435.14px;font-size:14px;line-height:14px;font-weight:400;letter-spacing:-0.086px;color:#fff;">IPv4 TCP</span>
<span class="t" style="left:382.94px;top:435.14px;font-size:14px;line-height:14px;font-weight:400;letter-spacing:0.046px;color:#fff;">DMZ net</span>
<span class="t" style="left:468.22px;top:436.07px;font-size:16px;line-height:16px;font-weight:400;letter-spacing:0px;color:#fff;">*</span>
<span class="t" style="left:507.12px;top:436.07px;font-size:16px;line-height:16px;font-weight:400;letter-spacing:0px;color:#fff;">*</span>
<span class="t" style="left:610.57px;top:435.14px;font-size:14px;line-height:14px;font-weight:400;letter-spacing:-0.055px;color:#fff;">80 (HTTP)</span>
<span class="t" style="left:709.12px;top:436.07px;font-size:16px;line-height:16px;font-weight:400;letter-spacing:0px;color:#fff;">*</span>
<span class="t" style="left:777.11px;top:435.14px;font-size:14px;line-height:14px;font-weight:400;letter-spacing:0.303px;color:#fff;">none</span>
<span class="t" style="left:167.72px;top:471.14px;font-size:14px;line-height:14px;font-weight:400;letter-spacing:0.174px;color:#1a9889;">0 /196.69 MiB</span>
<span class="t" style="left:274.05px;top:471.14px;font-size:14px;line-height:14px;font-weight:400;letter-spacing:-0.086px;color:#fff;">IPv4 TCP</span>
<span class="t" style="left:382.94px;top:471.14px;font-size:14px;line-height:14px;font-weight:400;letter-spacing:0.046px;color:#fff;">DMZ net</span>
<span class="t" style="left:468.22px;top:472.07px;font-size:16px;line-height:16px;font-weight:400;letter-spacing:0px;color:#fff;">*</span>
<span class="t" style="left:507.12px;top:472.07px;font-size:16px;line-height:16px;font-weight:400;letter-spacing:0px;color:#fff;">*</span>
<span class="t" style="left:610.80px;top:471.14px;font-size:14px;line-height:14px;font-weight:400;letter-spacing:-0.207px;color:#fff;">443 (HTTPS)</span>
<span class="t" style="left:709.12px;top:472.07px;font-size:16px;line-height:16px;font-weight:400;letter-spacing:0px;color:#fff;">*</span>
<span class="t" style="left:777.11px;top:471.14px;font-size:14px;line-height:14px;font-weight:400;letter-spacing:0.303px;color:#fff;">none</span>
<span class="t" style="left:275.34px;top:369.85px;font-size:11px;line-height:11px;font-weight:400;letter-spacing:0.707px;color:#fff;text-decoration:underline;text-underline-offset:1px">any</span>
<span class="t" style="left:903.54px;top:518.11px;font-size:12px;line-height:12px;font-weight:400;letter-spacing:-0.007px;color:#fff;">Add</span>
<span class="t" style="left:968.14px;top:518.11px;font-size:12px;line-height:12px;font-weight:400;letter-spacing:0.193px;color:#fff;">Add</span>
<span class="t" style="left:1032.13px;top:518.11px;font-size:12px;line-height:12px;font-weight:400;letter-spacing:-0.024px;color:#fff;">Delete</span>
<span class="t" style="left:1109.69px;top:518.11px;font-size:12px;line-height:12px;font-weight:400;letter-spacing:-0.3px;color:#aaaaaa;">Save</span>
<span class="t" style="left:1178.49px;top:518.11px;font-size:12px;line-height:12px;font-weight:400;letter-spacing:-0.107px;color:#fff;">Separator</span>
<span class="t" style="left:341.78px;top:783.94px;font-size:14px;line-height:14px;font-weight:400;letter-spacing:-0.058px;color:#fff;-webkit-text-stroke:0.55px #fff">pfSense</span>
<span class="t" style="left:395.75px;top:783.94px;font-size:14px;line-height:14px;font-weight:400;letter-spacing:-0.074px;color:#8a8a8a;">is © 2004 - 2018 by</span>
<span class="t" style="left:518.89px;top:783.94px;font-size:14px;line-height:14px;font-weight:400;letter-spacing:-0.053px;color:#fff;-webkit-text-stroke:0.55px #fff">Rubicon Communications, LLC (Netgate)</span>
<span class="t" style="left:772.63px;top:783.94px;font-size:14px;line-height:14px;font-weight:400;letter-spacing:-0.187px;color:#8a8a8a;">. All Rights Reserved. [</span>
<span class="t" style="left:911.37px;top:783.94px;font-size:14px;line-height:14px;font-weight:400;letter-spacing:-0.083px;color:#fff;-webkit-text-stroke:0.55px #fff">view license</span>
<span class="t" style="left:986.60px;top:783.94px;font-size:14px;line-height:14px;font-weight:400;letter-spacing:0px;color:#8a8a8a;">]</span>
</body></html>
